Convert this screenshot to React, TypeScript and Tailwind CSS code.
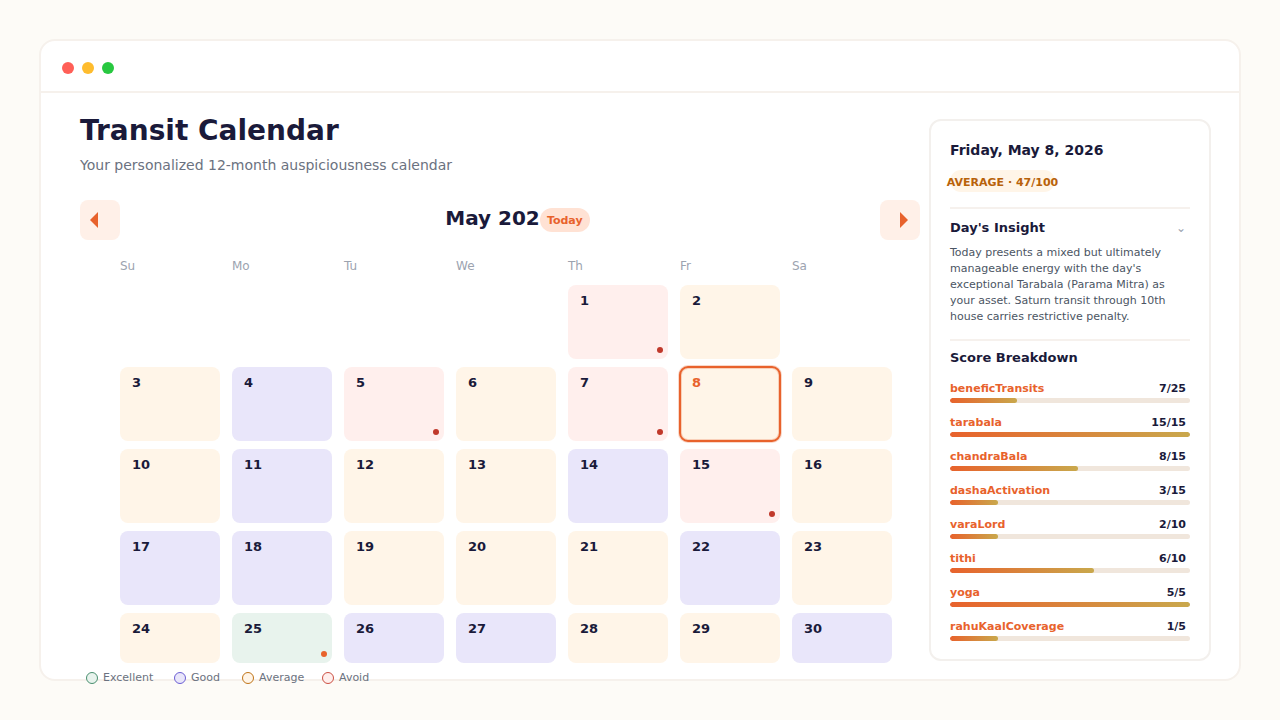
import React, { useState } from 'react'
import { clsx } from 'clsx'

type Rating = 'excellent' | 'good' | 'average' | 'avoid'

const ratingBg: Record<Rating, string> = {
  excellent: 'bg-[#e8f3ed]',
  good: 'bg-[#e9e6fa]',
  average: 'bg-[#fff5e8]',
  avoid: 'bg-[#ffefed]',
}

const weekdays = ['Su', 'Mo', 'Tu', 'We', 'Th', 'Fr', 'Sa']

// one letter per day: E / G / A / X, a space is an empty slot
const weeks = ['    XA ', 'AGXAXAA', 'AGAAGXA', 'GGAAAGA', 'AEGGAAG']

const codes: Record<string, Rating> = { E: 'excellent', G: 'good', A: 'average', X: 'avoid' }

const legend = [
  { label: 'Excellent', dot: 'bg-[#e8f3ed] border-[#4a9070]' },
  { label: 'Good', dot: 'bg-[#e9e6fa] border-[#6c5fd4]' },
  { label: 'Average', dot: 'bg-[#fff5e8] border-[#c07418]' },
  { label: 'Avoid', dot: 'bg-[#ffefed] border-[#cc5044]' },
]

const scores = [
  { name: 'beneficTransits', value: 7, max: 25 },
  { name: 'tarabala', value: 15, max: 15 },
  { name: 'chandraBala', value: 8, max: 15 },
  { name: 'dashaActivation', value: 3, max: 15 },
  { name: 'varaLord', value: 2, max: 10 },
  { name: 'tithi', value: 6, max: 10 },
  { name: 'yoga', value: 5, max: 5 },
  { name: 'rahuKaalCoverage', value: 1, max: 5 },
]

function buildDays() {
  let day = 0
  return weeks.flatMap((week, row) =>
    week.split('').map((code, col) => ({
      key: `${row}-${col}`,
      row,
      day: code === ' ' ? null : ++day,
      rating: codes[code],
    }))
  )
}

const days = buildDays()

function NavButton({ label, points }: { label: string; points: string }) {
  return (
    <button aria-label={label} className="w-10 h-10 rounded-lg bg-[#fff0e8] shrink-0 cursor-pointer">
      <svg viewBox="0 0 40 40" className="w-10 h-10" aria-hidden="true">
        <polygon points={points} fill="#e8622c" />
      </svg>
    </button>
  )
}

function Calendar() {
  const [selected, setSelected] = useState(8)

  return (
    <main className="flex-1 min-w-0 pt-[18px]">
      <h1 className="text-[28px] leading-10 font-bold">Transit Calendar</h1>
      <p className="mt-1 text-sm leading-5 text-[#6b7280]">Your personalized 12-month auspiciousness calendar</p>

      <div className="mt-[25px] flex items-start justify-between">
        <NavButton label="Previous month" points="10,20 18,12 18,28" />
        <div className="flex items-start pl-[35px]">
          <h2 className="text-xl leading-9 font-bold">May 202</h2>
          <button className="mt-2 w-[50px] h-6 pt-0.5 rounded-full bg-[#ffe2d4] text-[11px] leading-4 font-bold text-[#e8622c] cursor-pointer">
            Today
          </button>
        </div>
        <NavButton label="Next month" points="28,20 20,12 20,28" />
      </div>

      <div className="pl-10 pr-7">
        <div className="mt-[18px] grid grid-cols-7 gap-3 text-xs leading-4 text-[#9ca3af]">
          {weekdays.map((w) => (
            <span key={w}>{w}</span>
          ))}
        </div>

        <div className="mt-[11px] grid grid-cols-7 gap-x-3 gap-y-2">
          {days.map(({ key, row, day, rating }) =>
            day === null ? (
              <div key={key} />
            ) : (
              <button
                key={key}
                onClick={() => setSelected(day)}
                className={clsx(
                  'relative flex items-start rounded-lg px-3 pt-1.5 text-[13px] leading-5 font-bold cursor-pointer',
                  row === weeks.length - 1 ? 'h-[50px]' : 'h-[74px]',
                  ratingBg[rating],
                  selected === day &&
                    'text-[#e8622c] outline-2 -outline-offset-1 outline-[#e8622c] shadow-[0_0_0_2px_#e8622c40,inset_0_0_0_2px_#e8622c40]'
                )}
              >
                {day}
                {(rating === 'avoid' || rating === 'excellent') && (
                  <span
                    className={clsx(
                      'absolute right-[5px] bottom-1.5 w-1.5 h-1.5 rounded-full',
                      rating === 'avoid' ? 'bg-[#c0392b]' : 'bg-[#e8622c]'
                    )}
                  />
                )}
              </button>
            )
          )}
        </div>
      </div>

      {/* Legend hangs over the bottom edge of the window */}
      <ul className="mt-[7px] -mb-8 ml-1.5 grid grid-cols-[88px_68px_80px_auto] text-[11px] leading-4 text-[#6b7280]">
        {legend.map((item) => (
          <li key={item.label} className="flex items-center gap-[5px]">
            <span className={clsx('w-3 h-3 rounded-full border', item.dot)} />
            {item.label}
          </li>
        ))}
      </ul>
    </main>
  )
}

function DayPanel() {
  const [open, setOpen] = useState(true)

  return (
    <aside className="w-[282px] shrink-0 mt-[26px] px-[19px] pt-[19px] pb-[18px] rounded-xl border-2 border-[#f3f0ed] bg-white">
      <h2 className="text-sm leading-5 font-bold">Friday, May 8, 2026</h2>
      <div className="mt-2.5 w-[105px] h-[22px] pt-1 rounded-full bg-[#fff5e8] flex items-center justify-center text-[11px] leading-4 font-bold text-[#b8620a] whitespace-nowrap">
        AVERAGE · 47/100
      </div>

      <section className="mt-[15px] pt-[9px] border-t-2 border-[#f6f1ed]">
        <button
          onClick={() => setOpen(!open)}
          aria-expanded={open}
          className="w-full flex items-center justify-between pr-1 text-[13px] leading-5 font-bold cursor-pointer"
        >
          Day's Insight
          <span className="text-xs font-normal text-[#9ca3af]">⌄</span>
        </button>
        {open && (
          <p className="mt-[7px] text-[11px] leading-4 text-[#4b5563]">
            Today presents a mixed but ultimately manageable energy with the day's exceptional Tarabala (Parama Mitra) as
            your asset. Saturn transit through 10th house carries restrictive penalty.
          </p>
        )}
      </section>

      <section className="mt-3.5 pt-[7px] border-t-2 border-[#f6f1ed]">
        <h3 className="text-[13px] leading-5 font-bold">Score Breakdown</h3>
        <ul className="mt-[13px] flex flex-col gap-3">
          {scores.map((s) => (
            <li key={s.name}>
              <div className="flex justify-between pr-1 text-[11px] leading-4 font-bold">
                <span className="text-[#e8622c]">{s.name}</span>
                <span>
                  {s.value}/{s.max}
                </span>
              </div>
              <div className="mt-px h-[5px] rounded-full bg-[#f0e6dc] overflow-hidden">
                <div
                  className="h-full rounded-full bg-linear-to-r/srgb from-[#e8622c] to-[#c9a84c]"
                  style={{ width: `${(s.value / s.max) * 100}%` }}
                />
              </div>
            </li>
          ))}
        </ul>
      </section>
    </aside>
  )
}

export default function App() {
  return (
    <div className="min-h-screen p-[39px] bg-[#fdfbf7] text-[#1a1a3a] font-['DejaVu_Sans',sans-serif]">
      <div className="rounded-2xl border-2 border-[#f6f1ec] bg-white">
        <header className="flex gap-2 px-[21px] pt-[21px] pb-[17px] border-b-2 border-[#f6f1ec]">
          <span className="w-3 h-3 rounded-full bg-[#ff5f57]" />
          <span className="w-3 h-3 rounded-full bg-[#febc2e]" />
          <span className="w-3 h-3 rounded-full bg-[#28c840]" />
        </header>
        <div className="flex items-start gap-[9px] pl-[39px] pr-7 pb-[18px]">
          <Calendar />
          <DayPanel />
        </div>
      </div>
    </div>
  )
}
